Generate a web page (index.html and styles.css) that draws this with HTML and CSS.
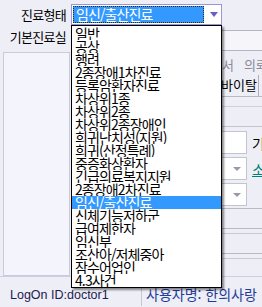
FILE: index.html
```html
<!DOCTYPE html>
<html lang="ko">
<head>
    <meta charset="UTF-8">
    <title>진료형태</title>
    <link rel="stylesheet" href="styles.css">
</head>
<body>
    <div class="window">
        <div class="form">
            <div class="row row-type">
                <label class="lbl">진료형태</label>
                <div class="combo">
                    <span class="combo-value">임신/출산진료</span>
                    <span class="combo-arrow"></span>
                </div>
            </div>
            <div class="row row-room">
                <label class="lbl">기본진료실</label>
                <div class="field"></div>
            </div>
            <div class="main">
                <div class="side-panel"></div>
                <div class="content">
                    <div class="tabs-top">
                        <span>소견서</span>
                        <span>의뢰서</span>
                    </div>
                    <div class="tabs-bottom">
                        <span class="tab">처치</span>
                        <span class="tab tab-on">바이탈</span>
                    </div>
                    <div class="sheet">
                        <div class="band"></div>
                        <div class="grid">
                            <div class="input"></div>
                            <span class="glbl">기</span>
                            <div class="input combo-sm"><span class="arrow-sm"></span></div>
                            <span class="glbl link">소</span>
                            <div class="input combo-sm"><span class="arrow-sm"></span></div>
                            <span></span>
                        </div>
                        <div class="strip s1"></div>
                        <div class="strip s2"></div>
                        <div class="strip s3"></div>
                    </div>
                </div>
            </div>
        </div>
        <div class="status">
            <span class="logon">LogOn ID:doctor1</span>
            <span class="user">사용자명: 한의사랑</span>
        </div>

        <ul class="dropdown">
            <li>일반</li>
            <li>공상</li>
            <li>행려</li>
            <li>2종장애1차진료</li>
            <li>등록암환자진료</li>
            <li>차상위1종</li>
            <li>차상위2종</li>
            <li>차상위2종장애인</li>
            <li>희귀난치성(지원)</li>
            <li>희귀(산정특례)</li>
            <li>중증화상환자</li>
            <li>긴급의료복지지원</li>
            <li>2종장애2차진료</li>
            <li class="on">임신/출산진료</li>
            <li>신체기능저하군</li>
            <li>급여제한자</li>
            <li>임신부</li>
            <li>조산아/저체중아</li>
            <li>잠수어업인</li>
            <li>4.3사건</li>
        </ul>
    </div>
</body>
</html>
```

FILE: styles.css
```css
* {
    margin: 0;
    padding: 0;
    box-sizing: border-box;
}
ul,li {
    list-style-type: none;
}
body {
    width: 262px;
    height: 307px;
    overflow: hidden;
    background: #eeeef6;
    font-family: "Noto Sans CJK KR", sans-serif;
    font-size: 12px;
    color: #000;
}
.window {
    position: relative;
    height: 307px;
    display: flex;
    flex-direction: column;
}
.form {
    flex: 1;
    display: flex;
    flex-direction: column;
}
.row {
    display: flex;
}
.lbl {
    width: 66px;
    margin-right: 5px;
    text-align: right;
    font-size: 13px;
    letter-spacing: -0.7px;
    white-space: nowrap;
}
.row-type {
    height: 30px;
    padding-top: 4px;
}
.row-type .lbl {
    line-height: 21px;
}
.combo {
    width: 151px;
    height: 21px;
    border: 1px solid #9c94d8;
    background: #fff;
    display: flex;
    align-items: center;
    padding: 1px;
}
.combo-value {
    width: 131px;
    height: 17px;
    background: #3399ff;
    color: #fff;
    border: 1px dotted #3a2a10;
    font-size: 14px;
    line-height: 14px;
    letter-spacing: -0.9px;
    padding-left: 2px;
    white-space: nowrap;
    overflow: hidden;
}
.combo-arrow {
    margin-left: 6px;
    width: 0;
    height: 0;
    border-left: 4px solid transparent;
    border-right: 4px solid transparent;
    border-top: 5px solid #6a5cc8;
}
.row-room {
    height: 21px;
}
.row-room .lbl {
    line-height: 13px;
}
.field {
    flex: 1;
    border-top: 1px solid #b4b4c4;
    border-bottom: 1px solid #b4b4c4;
    background: #f6f6fa;
}
.main {
    flex: 1;
    display: flex;
}
.side-panel {
    width: 67px;
    margin: 1px 1px 0 3px;
    border: 1px solid #cacad8;
    background: #f4f4fc;
}
.content {
    flex: 1;
    display: flex;
    flex-direction: column;
    overflow: hidden;
}
.tabs-top {
    height: 23px;
    padding: 6px 0 0 127px;
    display: flex;
    gap: 10px;
    color: #8a8a96;
    font-size: 13px;
    line-height: 16px;
    white-space: nowrap;
}
.tabs-bottom {
    height: 23px;
    display: flex;
    align-items: flex-end;
    justify-content: flex-end;
    border-bottom: 1px solid #b8b8c8;
    white-space: nowrap;
    font-size: 13px;
}
.tab {
    height: 21px;
    line-height: 20px;
    padding: 0 4px;
}
.tab-on {
    margin-right: 3px;
    padding: 0 1px 0 2px;
    border-right: 1px solid #b0b0c0;
}
.sheet {
    flex: 1;
    display: flex;
    flex-direction: column;
}
.band {
    height: 21px;
    margin-top: 9px;
    border-top: 1px solid #d0d0dc;
    border-bottom: 1px solid #c4c4d0;
}
.grid {
    display: grid;
    grid-template-columns: 176px 1fr;
    grid-auto-rows: 23px;
    row-gap: 3px;
    margin-top: 4px;
    align-items: center;
}
.input {
    height: 23px;
    margin-left: 80px;
    border: 1px solid #c4c4d0;
    background: #fff;
}
.combo-sm {
    display: flex;
    align-items: center;
    justify-content: flex-end;
    padding-right: 5px;
}
.arrow-sm {
    width: 0;
    height: 0;
    border-left: 4px solid transparent;
    border-right: 4px solid transparent;
    border-top: 4px solid #9a9aa6;
}
.glbl {
    padding-left: 5px;
    font-size: 14px;
}
.link {
    color: #00807a;
    text-decoration: underline;
}
.strip {
    border-top: 1px solid #b8b8c8;
    border-bottom: 1px solid #c8c8d6;
    height: 6px;
    background: #eeeef6;
}
.s1 {
    margin-top: 2px;
    height: 1px;
    border-bottom: none;
}
.s2 {
    margin-top: 19px;
}
.s3 {
    margin-top: 19px;
}
.status {
    height: 31px;
    border-top: 1px solid #cfcbe8;
    display: flex;
    align-items: center;
    padding-top: 5px;
}
.logon {
    width: 141px;
    padding-left: 10px;
    font-family: "Liberation Sans", sans-serif;
    font-size: 12.5px;
    color: #1c2050;
}
.user {
    height: 22px;
    line-height: 20px;
    border-left: 1px solid #c8c8d4;
    padding-left: 4px;
    font-size: 14px;
    color: #1e3c9a;
    white-space: nowrap;
}
.dropdown {
    position: absolute;
    left: 71px;
    top: 25px;
    width: 151px;
    padding-top: 1px;
    background: #fff;
    border: 1px solid #000;
    box-shadow: 2px 2px 2px rgba(0,0,0,0.45);
}
.dropdown li {
    height: 13px;
    line-height: 13px;
    padding-left: 3px;
    font-size: 14px;
    letter-spacing: -0.9px;
    white-space: nowrap;
    overflow: hidden;
}
.dropdown li.on {
    background: #3399ff;
    color: #fff;
}
```
